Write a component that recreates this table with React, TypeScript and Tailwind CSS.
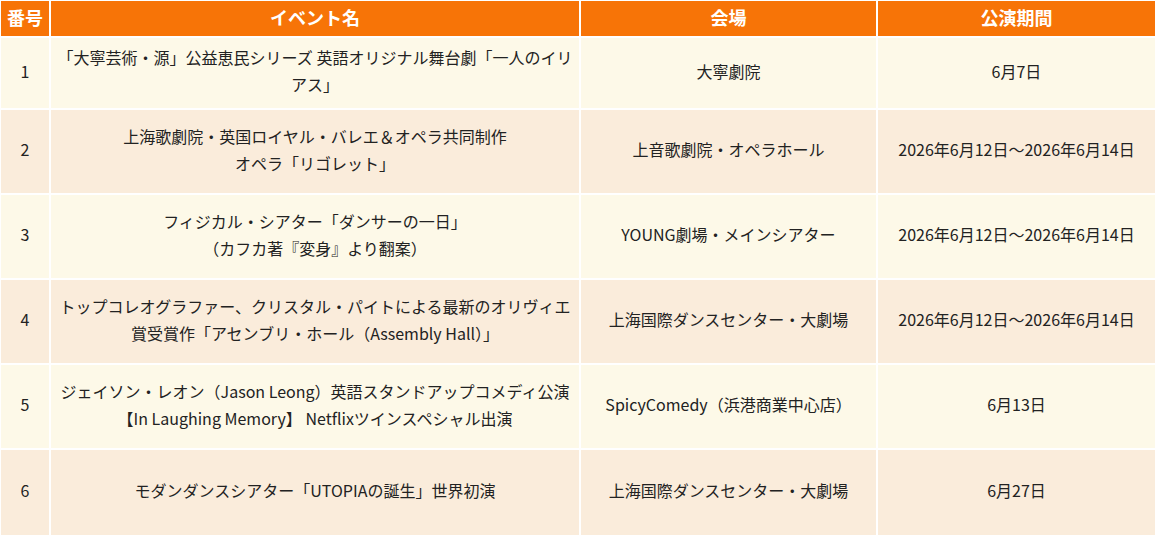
type Performance = {
  no: number;
  title: string[];
  venue: string;
  period: string;
};

const performances: Performance[] = [
  {
    no: 1,
    title: ["「大寧芸術・源」公益恵民シリーズ 英語オリジナル舞台劇「一人のイリ", "アス」"],
    venue: "大寧劇院",
    period: "6月7日"
  },
  {
    no: 2,
    title: ["上海歌劇院・英国ロイヤル・バレエ＆オペラ共同制作", "オペラ「リゴレット」"],
    venue: "上音歌劇院・オペラホール",
    period: "2026年6月12日～2026年6月14日"
  },
  {
    no: 3,
    title: ["フィジカル・シアター「ダンサーの一日」", "（カフカ著『変身』より翻案）"],
    venue: "YOUNG劇場・メインシアター",
    period: "2026年6月12日～2026年6月14日"
  },
  {
    no: 4,
    title: [
      "トップコレオグラファー、クリスタル・パイトによる最新のオリヴィエ",
      "賞受賞作「アセンブリ・ホール（Assembly Hall）」"
    ],
    venue: "上海国際ダンスセンター・大劇場",
    period: "2026年6月12日～2026年6月14日"
  },
  {
    no: 5,
    title: [
      "ジェイソン・レオン（Jason Leong）英語スタンドアップコメディ公演",
      "【In Laughing Memory】 Netflixツインスペシャル出演"
    ],
    venue: "SpicyComedy（浜港商業中心店）",
    period: "6月13日"
  },
  {
    no: 6,
    title: ["モダンダンスシアター「UTOPIAの誕生」世界初演"],
    venue: "上海国際ダンスセンター・大劇場",
    period: "6月27日"
  }
];

const rowHeights = ["h-[70px]", "h-[83px]", "h-[83px]", "h-[83px]", "h-[83px]", "h-[85px]"];

function HeaderCell({ children }: { children: React.ReactNode }) {
  return (
    <div className="flex h-[35px] items-center justify-center bg-[#f77407] pb-[2px] text-[18px] font-bold text-white">
      {children}
    </div>
  );
}

function Cell({ children, shade, height }: { children: React.ReactNode; shade: boolean; height: string }) {
  return (
    <div
      className={`flex ${height} flex-col items-center justify-center px-1 pb-1 text-center text-[16px] leading-[27px] text-[#222] ${
        shade ? "bg-[#faecdb]" : "bg-[#fdf9e8]"
      }`}
    >
      {children}
    </div>
  );
}

export default function App() {
  return (
    <div
      className="min-h-[535px] w-[1157px] bg-white pl-[1px] pt-[1px]"
      style={{ fontFamily: '"Noto Sans CJK JP", "Noto Sans", sans-serif' }}
    >
      <div className="grid grid-cols-[48px_528px_295px_277px] gap-[2px]">
        <HeaderCell>番号</HeaderCell>
        <HeaderCell>イベント名</HeaderCell>
        <HeaderCell>会場</HeaderCell>
        <HeaderCell>公演期間</HeaderCell>

        {performances.map((p, i) => {
          const shade = i % 2 === 1;
          const height = rowHeights[i];
          return [
            <Cell key={`${p.no}-no`} shade={shade} height={height}>
              {p.no}
            </Cell>,
            <Cell key={`${p.no}-title`} shade={shade} height={height}>
              {p.title.map((line) => (
                <span key={line} className="block whitespace-nowrap">
                  {line}
                </span>
              ))}
            </Cell>,
            <Cell key={`${p.no}-venue`} shade={shade} height={height}>
              <span className="whitespace-nowrap">{p.venue}</span>
            </Cell>,
            <Cell key={`${p.no}-period`} shade={shade} height={height}>
              <span className="whitespace-nowrap">{p.period}</span>
            </Cell>
          ];
        })}
      </div>
    </div>
  );
}
